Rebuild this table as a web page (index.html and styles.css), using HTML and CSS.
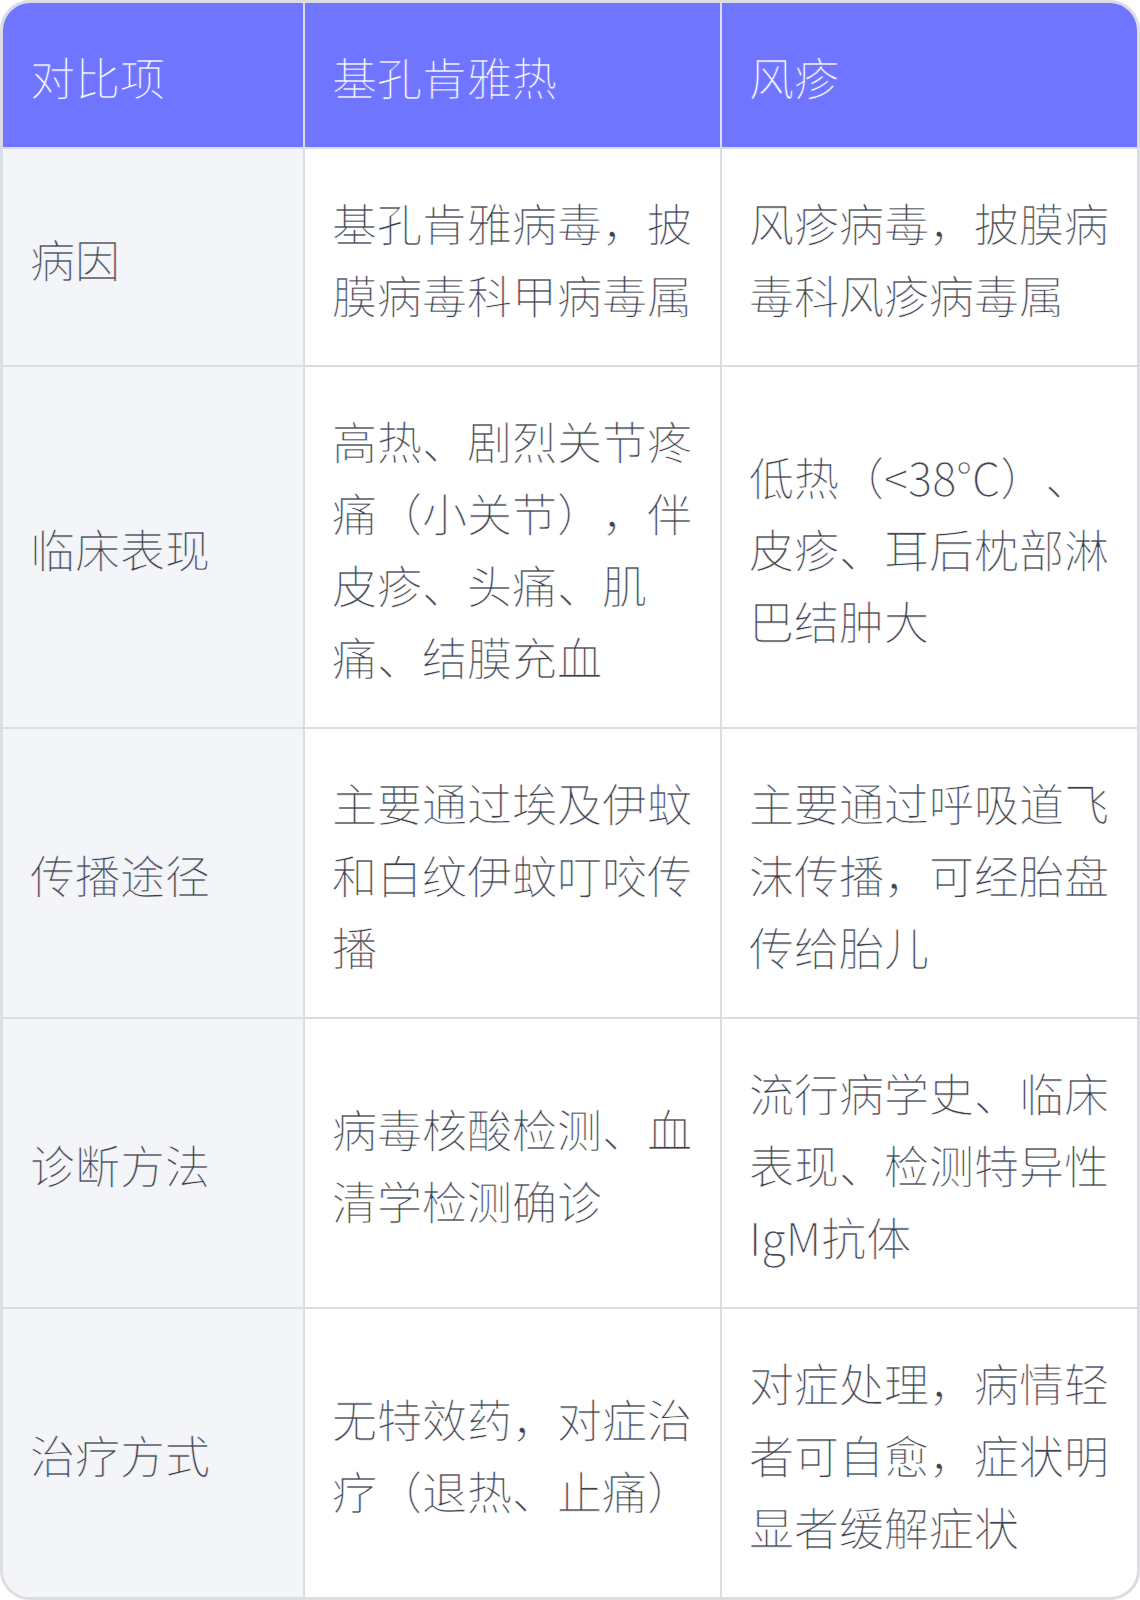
FILE: index.html
```html
<!DOCTYPE html>
<html lang="zh-CN">
<head>
<meta charset="utf-8">
<link rel="stylesheet" href="styles.css">
</head>
<body>
<div class="wrap">
<table class="cmp">
  <colgroup>
    <col class="col-a">
    <col class="col-b">
    <col class="col-c">
  </colgroup>
  <thead>
    <tr><th>对比项</th><th>基孔肯雅热</th><th>风疹</th></tr>
  </thead>
  <tbody>
    <tr><td class="key">病因</td><td>基孔肯雅病毒，披膜病毒科甲病毒属</td><td>风疹病毒，披膜病毒科风疹病毒属</td></tr>
    <tr><td class="key">临床表现</td><td>高热、剧烈关节疼痛（小关节），伴皮疹、头痛、肌痛、结膜充血</td><td>低热（&lt;38°C）、皮疹、耳后枕部淋巴结肿大</td></tr>
    <tr><td class="key">传播途径</td><td>主要通过埃及伊蚊和白纹伊蚊叮咬传播</td><td>主要通过呼吸道飞沫传播，可经胎盘传给胎儿</td></tr>
    <tr><td class="key">诊断方法</td><td>病毒核酸检测、血清学检测确诊</td><td>流行病学史、临床表现、检测特异性IgM抗体</td></tr>
    <tr><td class="key">治疗方式</td><td>无特效药，对症治疗（退热、止痛）</td><td>对症处理，病情轻者可自愈，症状明显者缓解症状</td></tr>
  </tbody>
</table>
</div>
</body>
</html>
```
FILE: styles.css
```css
html, body {
  margin: 0;
  padding: 0;
  background: #ffffff;
}
.wrap {
  width: 1140px;
  height: 1600px;
  box-sizing: border-box;
  border: 3px solid #dcdde3;
  border-radius: 30px;
  overflow: hidden;
}
.cmp {
  width: 1134px;
  border-collapse: separate;
  border-spacing: 0;
  table-layout: fixed;
  font-family: "Noto Sans CJK SC Light", "Noto Sans CJK SC DemiLight", "Noto Sans CJK SC", "Noto Sans", sans-serif;
  font-weight: 300;
  font-size: 45px;
  line-height: 72px;
  color: #40434f;
  text-spacing-trim: space-all;
  -webkit-text-stroke: 0.6px #ffffff;
}
.col-a { width: 302px; }
.col-b { width: 417px; }
.col-c { width: 415px; }
.cmp th, .cmp td {
  box-sizing: border-box;
  padding: 38px 26px 34px 27px;
  text-align: left;
  vertical-align: middle;
  font-weight: 300;
  border-right: 2px solid #dcdde3;
  border-bottom: 2px solid #dcdde3;
}
.cmp th:last-child, .cmp td:last-child { border-right: none; }
.cmp tbody tr:last-child td { border-bottom: none; }
.cmp th {
  background: #7075ff;
  color: #ffffff;
  -webkit-text-stroke-color: #7075ff;
}
.cmp td.key {
  background: #f4f5f9;
  -webkit-text-stroke-color: #f4f5f9;
}
```
